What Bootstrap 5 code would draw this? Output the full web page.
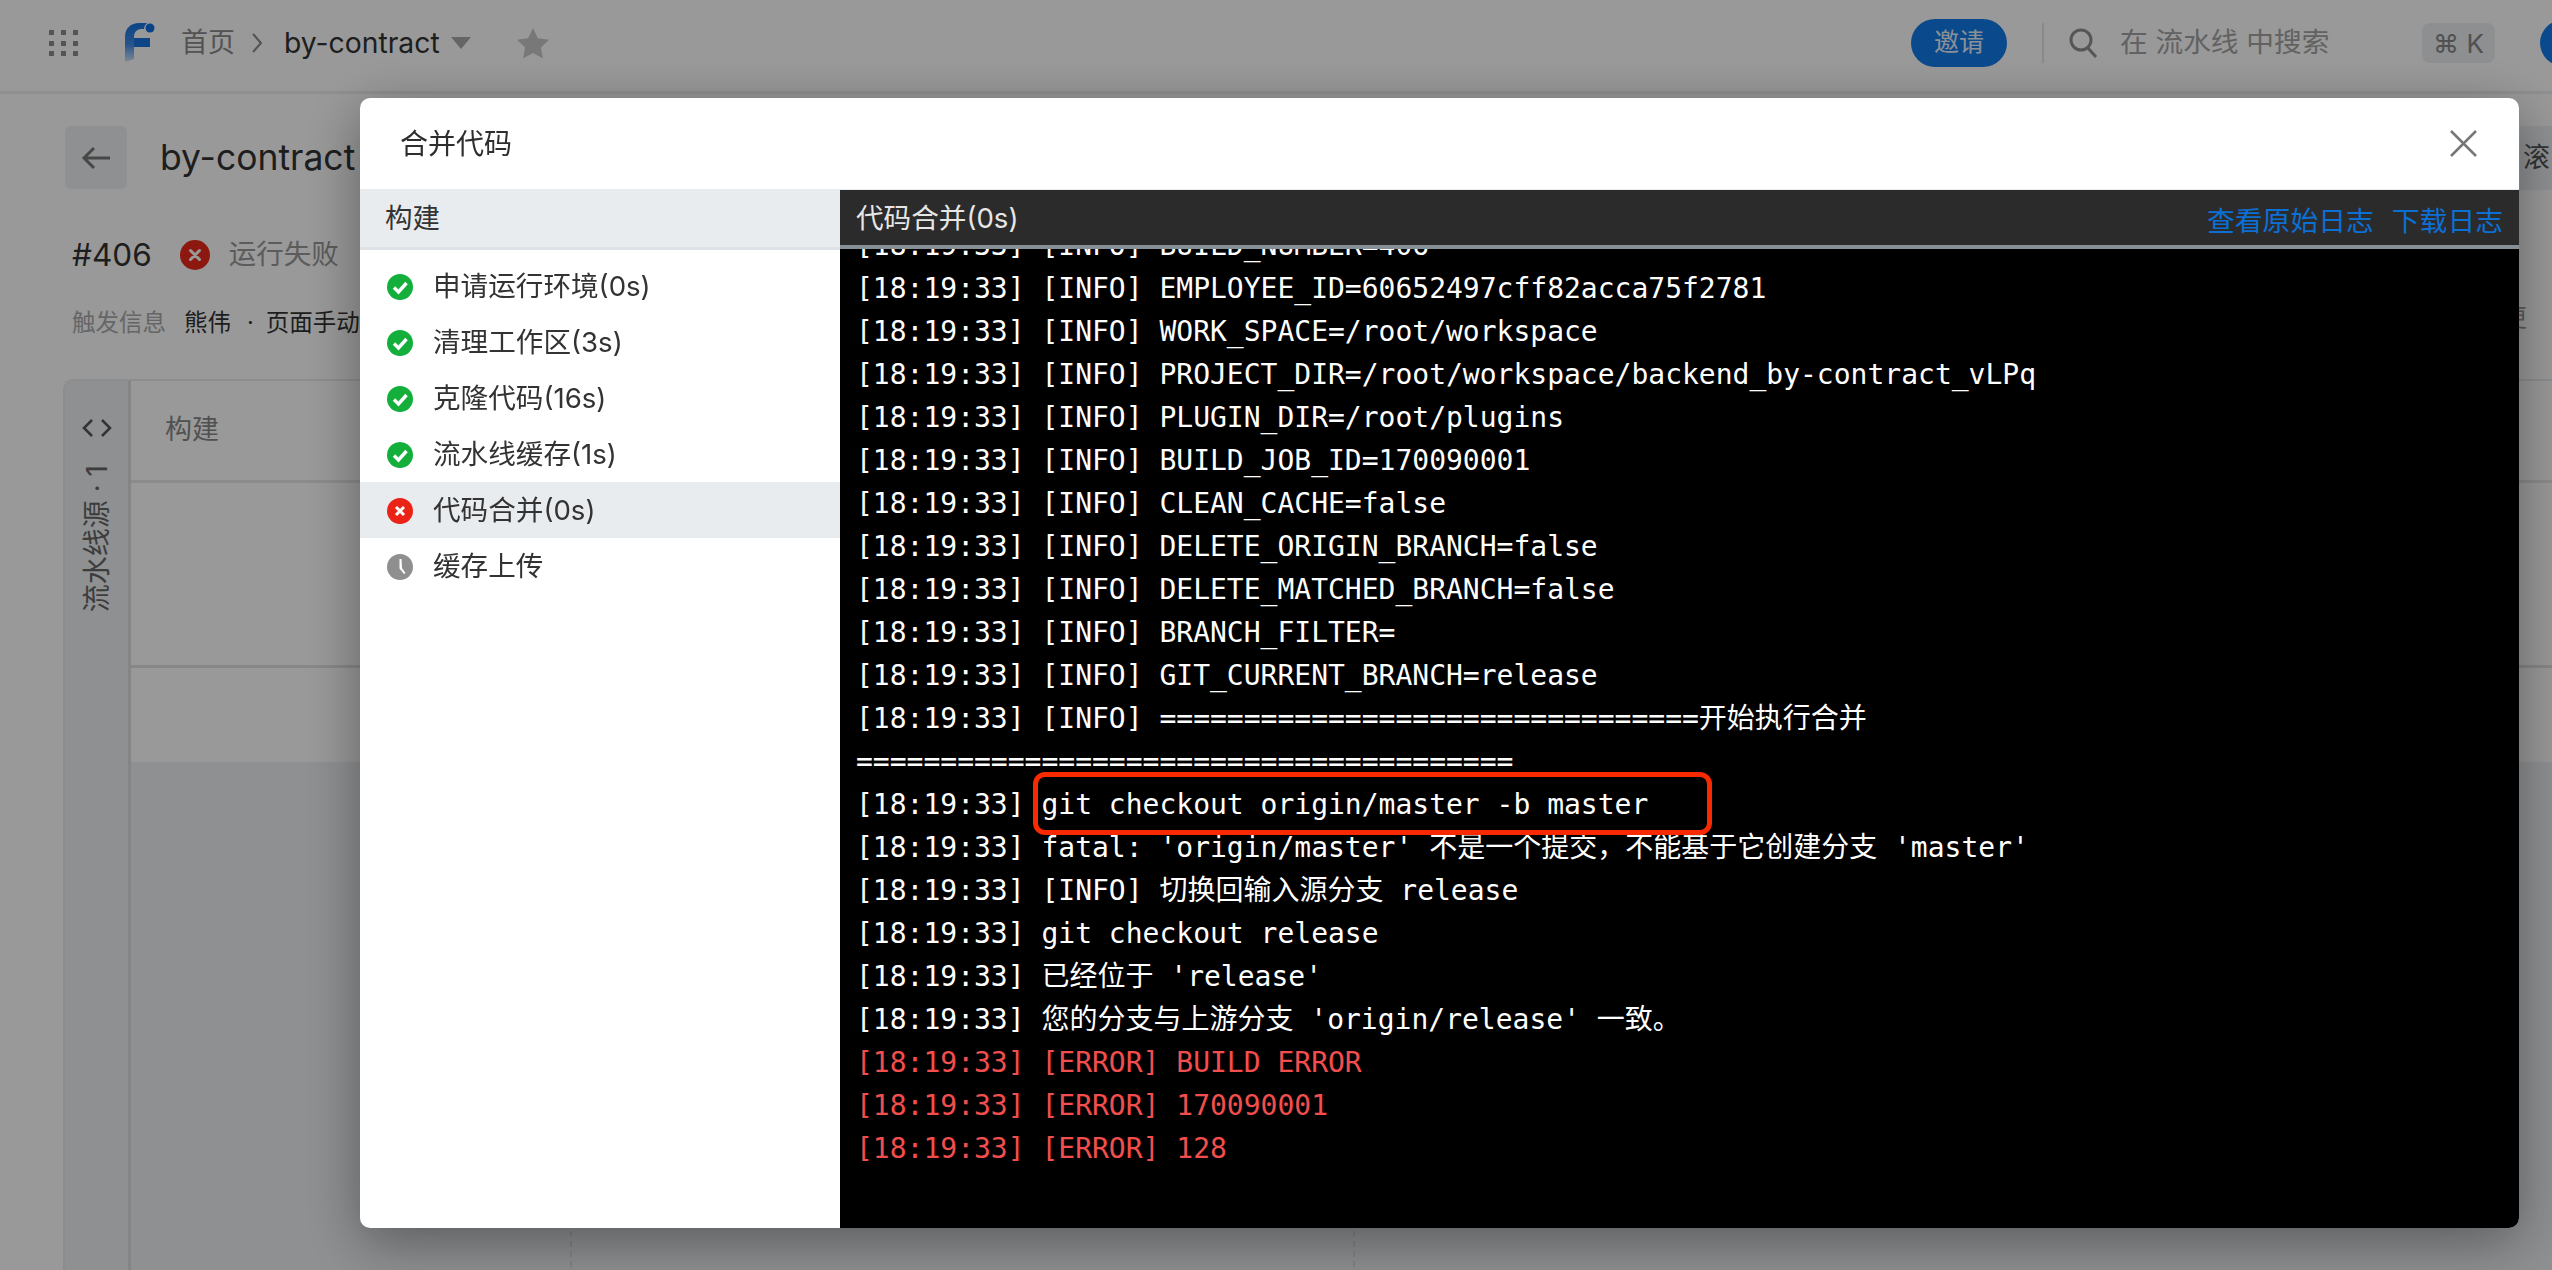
<!DOCTYPE html>
<html lang="zh-CN">
<head>
<meta charset="utf-8">
<title>合并代码</title>
<link href="https://cdn.jsdelivr.net/npm/bootstrap@5.3.0/dist/css/bootstrap.min.css" rel="stylesheet">
<style>
html,body{height:100%;}
body{font-family:Inter,"Noto Sans CJK SC",sans-serif;background:#fff;color:#333;font-size:27px;}
.topbar{height:94px;border-bottom:3px solid #eceef1;padding-left:49px;padding-bottom:5px;background:#fff;}
.grid-ico{width:29px;height:26px;color:#8c8c8c;margin-right:47px;flex:none;}
.brand-ico{width:31px;height:40px;margin-right:25px;flex:none;}
.crumb-home{color:#8a8a8a;font-size:27px;}
.crumb-sep{width:12px;height:24px;margin:0 21px 0 16px;color:#8a8a8a;flex:none;}
.crumb-cur{font-size:28.300px;color:#333;}
.caret-ico{width:20px;height:12px;margin-left:11px;margin-right:46px;color:#a8a8a8;flex:none;}
.star-ico{width:32px;height:30px;color:#c8c8c8;flex:none;}
.invite-btn{width:96px;height:48px;border-radius:24px;background:#117be9;color:#e8f1fc;font-size:25px;border:0;padding:0;}
.bar-rule{width:2px;height:40px;background:#e6e6e6;margin:0 25px 0 35px;}
.search-ico{width:29px;height:30px;color:#8f8f8f;margin-right:22px;flex:none;}
.search-tip{color:#a3a3a3;font-size:27.700px;width:302px;white-space:nowrap;}
.kbd-chip{width:73px;height:40px;border-radius:8px;background:#eceef1;color:#888;font-size:26px;margin-right:45px;flex:none;}
.avatar-dot{width:46px;height:46px;border-radius:50%;background:#117be9;flex:none;margin-right:-34px;}
.page-body{padding:32px 0 0 63px;}
.title-row{height:63px;}
.back-box{width:62px;height:63px;border-radius:6px;background:#eef0f3;color:#777;margin-left:2px;margin-right:33px;flex:none;}
.back-box svg{width:30px;height:24px;}
.pipe-title{font-size:35.500px;color:#333;white-space:nowrap;}
.scroll-chip{position:absolute;left:2520px;top:126px;height:64px;width:40px;background:#eef0f3;color:#555;padding-left:3px;}
.run-row{margin-top:48px;height:36px;padding-left:9px;}
.run-no{font-size:31.500px;color:#333;margin-right:28px;}
.run-fail-ico{width:30px;height:30px;margin-right:19px;flex:none;}
.run-state{font-size:27.500px;color:#999;}
.trig-row{margin-top:32px;height:36px;padding-left:9px;font-size:23.500px;color:#333;white-space:nowrap;}
.trig-label{color:#aaa;margin-right:18px;}
.trig-dot{margin:0 12px 0 16px;}
.trig-more{position:absolute;left:2503px;top:300px;color:#999;font-size:24px;}
.board{margin-top:38px;border:2px solid #e9ebee;border-radius:10px 0 0 0;border-right:0;height:900px;}
.board-rail{width:66px;flex:none;background:#eef0f3;border-right:3px solid #dcdee1;padding-top:38px;color:#666;}
.rail-code{width:30px;height:18px;color:#555;}
.rail-text{writing-mode:vertical-rl;text-orientation:sideways;transform:rotate(180deg);font-size:28px;margin-top:28px;white-space:nowrap;}
.board-main{min-width:0;}
.board-head{height:102px;border-bottom:3px solid #e8e8e8;padding-left:34px;color:#888;}
.board-gap{height:185px;border-bottom:3px solid #e2e2e2;}
.board-sub{height:94px;}
.board-cols{background:#eef0f3;}
.col-one{width:441px;border-right:2px dashed #dadcdf;flex:none;}
.col-two{width:783px;border-right:2px dashed #dadcdf;flex:none;}
.dim-layer{position:fixed;inset:0;background:rgba(0,0,0,.4);padding:98px 33px 42px 360px;}
.merge-modal{height:100%;background:#fff;border-radius:10px;overflow:hidden;box-shadow:0 14px 56px rgba(0,0,0,.38);}
.merge-head{height:91px;padding:0 42px 0 40px;flex:none;}
.merge-title{font-size:28px;color:#2e2e2e;}
.close-ico{width:27px;height:27px;color:#777;}
.merge-split{min-height:0;}
.steps-pane{width:480px;flex:none;}
.steps-title{height:61px;background:#e9ecef;border-bottom:3px solid #dee2e6;padding:2px 0 0 25px;font-size:27.500px;color:#333;}
.steps-list{padding-top:8px;}
.step-line{height:56px;padding:1px 0 0 27px;border:0;color:#333;font-size:27.600px;border-radius:0;}
.step-line.is-on{background:#e9ecef;}
.step-ico{width:26px;height:26px;margin-right:20px;flex:none;}
.log-pane{min-width:0;background:#000;}
.log-head{height:60px;background:#2b2b2b;border-top:1px solid #e9ecef;border-bottom:4px solid #868e96;padding:2px 16px 0 16px;color:#e6e6e6;font-size:27.600px;flex:none;}
.log-links{padding-top:6px;}
.log-links a{color:#0b6fd4;text-decoration:none;margin-left:18px;font-size:27.800px;}
.log-scroll{position:relative;overflow:hidden;}
.log-lines{margin-top:-25px;padding-left:16px;font-family:"DejaVu Sans Mono","Noto Sans CJK SC",monospace;font-size:28px;line-height:43px;color:#fff;white-space:pre;}
.log-err{color:#f24e4e;}
.red-mark{position:absolute;left:193px;top:523px;width:679px;height:63px;border:5px solid #fa2a00;border-radius:12px;}
</style>
</head>
<body class="overflow-hidden position-relative">

<nav class="topbar d-flex align-items-center">
  <svg class="grid-ico" viewBox="0 0 29 26" fill="currentColor"><rect x="0" y="0" width="5" height="5"/><rect x="12" y="0" width="5" height="5"/><rect x="24" y="0" width="5" height="5"/><rect x="0" y="11" width="5" height="5"/><rect x="12" y="11" width="5" height="5"/><rect x="24" y="11" width="5" height="5"/><rect x="0" y="21" width="5" height="5"/><rect x="12" y="21" width="5" height="5"/><rect x="24" y="21" width="5" height="5"/></svg>
  <svg class="brand-ico" viewBox="0 0 31 40"><defs><linearGradient id="stemfade" x1="0" y1="0" x2="0" y2="1"><stop offset="0" stop-color="#1673e0"/><stop offset=".55" stop-color="#3f8de6"/><stop offset="1" stop-color="#d5e4f7"/></linearGradient></defs><path d="M0 39V14C0 5 6 0 14 0h8c-2 2-3 4-3 6-6-.5-10 2-10 8v22z" fill="url(#stemfade)"/><rect x="9" y="15" width="16" height="9" fill="#1673e0"/><circle cx="25" cy="5" r="4.500" fill="#0f6fe0"/></svg>
  <span class="crumb-home">首页</span>
  <svg class="crumb-sep" viewBox="0 0 12 24" fill="none" stroke="currentColor" stroke-width="2"><path d="M2 3l8 9-8 9"/></svg>
  <span class="crumb-cur">by-contract</span>
  <svg class="caret-ico" viewBox="0 0 20 12" fill="currentColor"><path d="M0 0h20L10 12z"/></svg>
  <svg class="star-ico" viewBox="0 0 32 30" fill="currentColor"><path d="M16 0l4.900 10.200 11.100 1.500-8.100 7.700 2 11-9.900-5.300-9.900 5.300 2-11L0 11.700l11.100-1.500z"/></svg>
  <div class="flex-grow-1"></div>
  <button class="invite-btn" type="button">邀请</button>
  <div class="bar-rule"></div>
  <svg class="search-ico" viewBox="0 0 29 30" fill="none" stroke="currentColor" stroke-width="3"><circle cx="12" cy="12" r="10"/><path d="M19 20l8 9"/></svg>
  <span class="search-tip">在 流水线 中搜索</span>
  <span class="kbd-chip d-flex align-items-center justify-content-center">⌘ K</span>
  <span class="avatar-dot"></span>
</nav>

<main class="page-body">
  <div class="title-row d-flex align-items-center">
    <div class="back-box d-flex align-items-center justify-content-center">
      <svg viewBox="0 0 30 24" fill="none" stroke="currentColor" stroke-width="3"><path d="M29 12H3M13 2L3 12l10 10"/></svg>
    </div>
    <span class="pipe-title">by-contract</span>
  </div>
  <div class="scroll-chip d-flex align-items-center">滚</div>
  <div class="run-row d-flex align-items-center">
    <span class="run-no">#406</span>
    <svg class="run-fail-ico" viewBox="0 0 30 30"><circle cx="15" cy="15" r="15" fill="#e9291c"/><path d="M10.500 10.500l9 9m0-9l-9 9" stroke="#fff" stroke-width="3" stroke-linecap="round"/></svg>
    <span class="run-state">运行失败</span>
  </div>
  <div class="trig-row d-flex align-items-center">
    <span class="trig-label">触发信息</span><span>熊伟</span><span class="trig-dot">·</span><span>页面手动</span>
  </div>
  <div class="trig-more">更</div>
  <div class="board d-flex">
    <div class="board-rail d-flex flex-column align-items-center">
      <svg class="rail-code" viewBox="0 0 30 18" fill="none" stroke="currentColor" stroke-width="2.500"><path d="M10 1L2 9l8 8M20 1l8 8-8 8"/></svg>
      <span class="rail-text">流水线源 · 1</span>
    </div>
    <div class="board-main flex-grow-1 d-flex flex-column">
      <div class="board-head d-flex align-items-center">构建</div>
      <div class="board-gap"></div>
      <div class="board-sub"></div>
      <div class="board-cols flex-grow-1 d-flex"><div class="col-one"></div><div class="col-two"></div></div>
    </div>
  </div>
</main>

<div class="dim-layer">
  <div class="merge-modal d-flex flex-column">
    <div class="merge-head d-flex align-items-center justify-content-between">
      <span class="merge-title">合并代码</span>
      <svg class="close-ico" viewBox="0 0 27 27" fill="none" stroke="currentColor" stroke-width="2.500"><path d="M1 1l25 25M26 1L1 26"/></svg>
    </div>
    <div class="merge-split flex-grow-1 d-flex">
      <div class="steps-pane">
        <div class="steps-title d-flex align-items-center">构建</div>
        <div class="steps-list list-group list-group-flush">
          <div class="list-group-item step-line d-flex align-items-center">
            <svg class="step-ico" viewBox="0 0 26 26"><circle cx="13" cy="13" r="13" fill="#14ae3a"/><path d="M7 13.500l4.500 4.500L19.500 9" fill="none" stroke="#fff" stroke-width="3.400"/></svg>申请运行环境(0s)</div>
          <div class="list-group-item step-line d-flex align-items-center">
            <svg class="step-ico" viewBox="0 0 26 26"><circle cx="13" cy="13" r="13" fill="#14ae3a"/><path d="M7 13.500l4.500 4.500L19.500 9" fill="none" stroke="#fff" stroke-width="3.400"/></svg>清理工作区(3s)</div>
          <div class="list-group-item step-line d-flex align-items-center">
            <svg class="step-ico" viewBox="0 0 26 26"><circle cx="13" cy="13" r="13" fill="#14ae3a"/><path d="M7 13.500l4.500 4.500L19.500 9" fill="none" stroke="#fff" stroke-width="3.400"/></svg>克隆代码(16s)</div>
          <div class="list-group-item step-line d-flex align-items-center">
            <svg class="step-ico" viewBox="0 0 26 26"><circle cx="13" cy="13" r="13" fill="#14ae3a"/><path d="M7 13.500l4.500 4.500L19.500 9" fill="none" stroke="#fff" stroke-width="3.400"/></svg>流水线缓存(1s)</div>
          <div class="list-group-item step-line is-on d-flex align-items-center">
            <svg class="step-ico" viewBox="0 0 26 26"><circle cx="13" cy="13" r="13" fill="#ea2316"/><path d="M9 9l8 8m0-8l-8 8" fill="none" stroke="#fff" stroke-width="3"/></svg>代码合并(0s)</div>
          <div class="list-group-item step-line d-flex align-items-center">
            <svg class="step-ico" viewBox="0 0 26 26"><circle cx="13" cy="13" r="13" fill="#8f8f8f"/><path d="M12.500 5h2l.5 9 3.500 5-1.500 1-4.500-5.500z" fill="#fff"/></svg>缓存上传</div>
        </div>
      </div>
      <div class="log-pane flex-grow-1 d-flex flex-column">
        <div class="log-head d-flex align-items-center justify-content-between">
          <span>代码合并(0s)</span>
          <span class="log-links"><a href="#">查看原始日志</a><a href="#">下载日志</a></span>
        </div>
        <div class="log-scroll flex-grow-1">
<div class="log-lines"><div>[18:19:33] [INFO] BUILD_NUMBER=406</div><div>[18:19:33] [INFO] EMPLOYEE_ID=60652497cff82acca75f2781</div><div>[18:19:33] [INFO] WORK_SPACE=/root/workspace</div><div>[18:19:33] [INFO] PROJECT_DIR=/root/workspace/backend_by-contract_vLPq</div><div>[18:19:33] [INFO] PLUGIN_DIR=/root/plugins</div><div>[18:19:33] [INFO] BUILD_JOB_ID=170090001</div><div>[18:19:33] [INFO] CLEAN_CACHE=false</div><div>[18:19:33] [INFO] DELETE_ORIGIN_BRANCH=false</div><div>[18:19:33] [INFO] DELETE_MATCHED_BRANCH=false</div><div>[18:19:33] [INFO] BRANCH_FILTER=</div><div>[18:19:33] [INFO] GIT_CURRENT_BRANCH=release</div><div>[18:19:33] [INFO] ================================开始执行合并</div><div>=======================================</div><div>[18:19:33] git checkout origin/master -b master</div><div>[18:19:33] fatal: 'origin/master' 不是一个提交，不能基于它创建分支 'master'</div><div>[18:19:33] [INFO] 切换回输入源分支 release</div><div>[18:19:33] git checkout release</div><div>[18:19:33] 已经位于 'release'</div><div>[18:19:33] 您的分支与上游分支 'origin/release' 一致。</div><div class="log-err">[18:19:33] [ERROR] BUILD ERROR</div><div class="log-err">[18:19:33] [ERROR] 170090001</div><div class="log-err">[18:19:33] [ERROR] 128</div></div>
          <div class="red-mark"></div>
        </div>
      </div>
    </div>
  </div>
</div>

<script src="https://cdn.jsdelivr.net/npm/bootstrap@5.3.0/dist/js/bootstrap.bundle.min.js"></script>
</body>
</html>
